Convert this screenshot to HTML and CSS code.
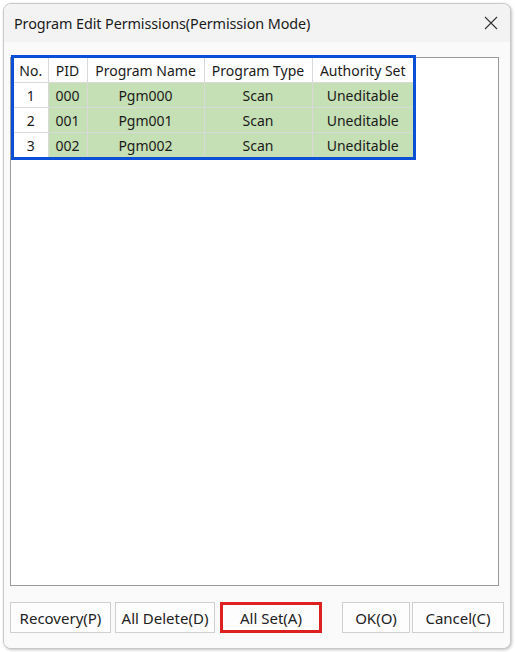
FILE: index.html
```html
<!DOCTYPE html>
<html>
<head>
<meta charset="utf-8">
<link rel="stylesheet" href="styles.css">
</head>
<body>
<div class="window">
  <div class="titlebar">
    <span class="title">Program Edit Permissions(Permission Mode)</span>
    <svg class="close" width="14" height="14" viewBox="0 0 14 14"><path d="M1 1L13 13M13 1L1 13" stroke="#333" stroke-width="1.1" fill="none"/></svg>
  </div>
  <div class="client">
    <div class="list">
      <div class="highlight">
        <table class="grid">
          <colgroup>
            <col class="c-no"><col class="c-pid"><col class="c-name"><col class="c-type"><col class="c-auth">
          </colgroup>
          <thead>
            <tr><th>No.</th><th>PID</th><th>Program Name</th><th>Program Type</th><th>Authority Set</th></tr>
          </thead>
          <tbody>
            <tr><td class="no">1</td><td>000</td><td class="ctr">Pgm000</td><td class="ctr">Scan</td><td class="ctr">Uneditable</td></tr>
            <tr><td class="no">2</td><td>001</td><td class="ctr">Pgm001</td><td class="ctr">Scan</td><td class="ctr">Uneditable</td></tr>
            <tr><td class="no">3</td><td>002</td><td class="ctr">Pgm002</td><td class="ctr">Scan</td><td class="ctr">Uneditable</td></tr>
          </tbody>
        </table>
      </div>
    </div>
    <div class="buttons">
      <div class="group">
        <button class="btn w-rec">Recovery(P)</button>
        <button class="btn w-del">All Delete(D)</button>
        <button class="btn w-set marked">All Set(A)</button>
      </div>
      <div class="group right">
        <button class="btn w-ok">OK(O)</button>
        <button class="btn w-cancel">Cancel(C)</button>
      </div>
    </div>
  </div>
</div>
</body>
</html>
```
FILE: styles.css
```css
html, body {
  margin: 0;
  padding: 0;
  background: #ffffff;
  width: 515px;
  height: 652px;
  overflow: hidden;
}
body {
  font-family: "Noto Sans", "Open Sans", sans-serif;
  color: #1a1a1a;
}
.window {
  margin: 3px 4px 0 3px;
  height: 646px;
  border: 1px solid #c8c8c8;
  border-radius: 8px;
  background: #f9f9f9;
  box-sizing: border-box;
  display: flex;
  flex-direction: column;
  overflow: hidden;
  box-shadow: 1px 1px 3px rgba(0,0,0,0.25);
}
.titlebar {
  height: 38px;
  flex: none;
  display: flex;
  align-items: center;
  justify-content: space-between;
  padding: 0 12px 0 10px;
  background: #f3f3f3;
}
.title {
  font-size: 14.4px;
  color: #1b1b1b;
  letter-spacing: -0.1px;
}
.close { display: block; }
.client {
  flex: 1;
  display: flex;
  flex-direction: column;
  padding: 15px 6px 0 6px;
  background: #fafafa;
}
.list {
  height: 529px;
  margin-right: 5px;
  border: 1px solid #9a9a9a;
  background: #ffffff;
  box-sizing: border-box;
  padding: 0;
}
.highlight {
  display: inline-block;
  border: 3px solid #0a4fd6;
  margin: -3px 0 0 0;
  background: #fff;
}
.grid {
  border-collapse: collapse;
  font-size: 14px;
  table-layout: fixed;
  width: 399px;
}
.c-no { width: 34px; }
.c-pid { width: 39px; }
.c-name { width: 117px; }
.c-type { width: 108px; }
.c-auth { width: 101px; }
.grid th, .grid td {
  height: 23px;
  padding: 1px 0 0 0;
  border: 1px solid #d9d9d9;
  font-weight: normal;
  white-space: nowrap;
  line-height: 18px;
  overflow: hidden;
  box-sizing: content-box;
}
.grid th {
  text-align: center;
  background: #ffffff;
  color: #1a1a1a;
}
.grid td {
  background: #c6e0b5;
  text-align: left;
  padding-left: 7px;
}
.grid td.ctr { text-align: center; padding-left: 0; }
.grid td.no { background: #ffffff; text-align: center; padding-left: 0; }
.grid tr > *:first-child { border-left: none; }
.grid tr > *:last-child { border-right: none; }
.grid thead th { border-top: none; }
.grid tbody tr:last-child td { border-bottom: none; }
.buttons {
  display: flex;
  justify-content: space-between;
  padding: 16px 0 0 0;
}
.group { display: flex; gap: 4px; }
.group.right { gap: 2px; margin-right: 0; }
.btn {
  height: 31px;
  font-family: inherit;
  font-size: 15px;
  color: #222;
  background: #fdfdfd;
  border: 1px solid #cfcfcf;
  border-radius: 0;
  padding: 0;
  margin: 0;
  white-space: nowrap;
}
.w-rec { width: 101px; }
.w-del { width: 100px; }
.w-set { width: 102px; margin-left: 1px; }
.w-ok { width: 68px; }
.w-cancel { width: 92px; }
.marked {
  border: 3px solid #df2020;
}
```
